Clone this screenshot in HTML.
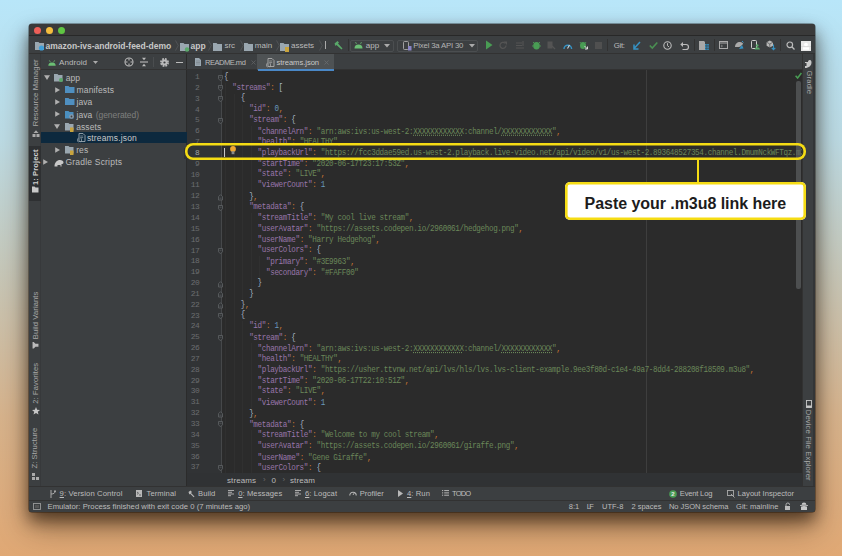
<!DOCTYPE html>
<html><head><meta charset="utf-8">
<style>
*{box-sizing:border-box;margin:0;padding:0}
html,body{width:842px;height:556px;overflow:hidden}
body{position:relative;background:linear-gradient(180deg,#b8e6f9 0%,#bcdbe4 25%,#c7c6b6 50%,#d7b38c 75%,#e0a874 100%);font-family:"Liberation Sans",sans-serif}
.a{position:absolute}
.t{white-space:nowrap}
.t u{text-decoration:underline;text-underline-offset:1px}
svg{overflow:visible}
#win{left:29px;top:24px;width:786px;height:488px;border-radius:3px;background:#3c3f41;box-shadow:0 8px 16px rgba(20,10,0,.55),0 16px 30px rgba(40,20,0,.4),0 0 0 .5px rgba(0,0,0,.6)}
pre{font-family:"Liberation Mono",monospace;font-size:7.6px;letter-spacing:-0.35px;line-height:10.84px}
#code{left:1.9px;top:2.3px;color:#a9b7c6;line-height:9.70px;transform:scaleY(1.12);transform-origin:0 0}
#code i{font-style:normal}
#code b{font-weight:normal}
.k{color:#9876aa}.s{color:#6a8759}.n{color:#6897bb}.o{color:#cc7832}
#code u{text-decoration:underline dotted #6a8759}
#nums{left:184px;top:72.0px;width:15.5px;text-align:right;color:#6b6d70;font-size:7.9px;letter-spacing:-0.3px}
.g{position:absolute;width:1px;background:#303030}
</style></head><body>
<div id="win" class="a"></div>
<!-- title bar -->
<div class="a" style="left:29px;top:24px;width:786px;height:12px;background:#3a3a3a;border-radius:3px 3px 0 0;border-bottom:1px solid #282828"></div>
<div class="a" style="left:33.8px;top:26.6px;width:7.4px;height:7.4px;border-radius:50%;background:#ee5f58"></div>
<div class="a" style="left:45.7px;top:26.6px;width:7.4px;height:7.4px;border-radius:50%;background:#f4bd3e"></div>
<div class="a" style="left:57.8px;top:26.6px;width:7.4px;height:7.4px;border-radius:50%;background:#5fc543"></div>
<!-- nav bar -->
<div class="a" style="left:29px;top:36px;width:786px;height:18px;background:#3c3f41;border-bottom:1px solid #323232"></div>
<!-- left strip -->
<div class="a" style="left:29px;top:54px;width:12px;height:432px;background:#3c3f41;border-right:1px solid #37393b"></div>
<!-- project panel -->
<div class="a" style="left:41px;top:54px;width:146px;height:432px;background:#3c3f41;border-right:1px solid #2b2b2b"></div>
<div class="a" style="left:41px;top:69px;width:146px;height:1px;background:#323232"></div>
<!-- tabs -->
<div class="a" style="left:187px;top:54px;width:615px;height:16px;background:#3c3f41;border-bottom:1px solid #323232"></div>
<!-- gutter / editor -->
<div class="a" style="left:187px;top:70px;width:35px;height:403px;background:#313335"></div>
<div class="a" style="left:222px;top:70px;width:580px;height:403px;background:#2b2b2b"></div>
<div class="a" style="left:646px;top:70px;width:1px;height:403px;background:#3e3e3e"></div>
<div class="a" style="left:221px;top:76px;width:1px;height:397px;background:#46484a"></div>
<div class="g" style="left:225.4px;top:82.8px;height:390.2px"></div><div class="g" style="left:233.8px;top:93.7px;height:379.3px"></div><div class="g" style="left:242.2px;top:104.5px;height:195.1px"></div><div class="g" style="left:242.2px;top:321.3px;height:151.7px"></div><div class="g" style="left:250.7px;top:126.2px;height:65.0px"></div><div class="g" style="left:250.7px;top:212.9px;height:75.9px"></div><div class="g" style="left:250.7px;top:343.0px;height:65.0px"></div><div class="g" style="left:250.7px;top:429.7px;height:43.3px"></div><div class="g" style="left:259.1px;top:256.3px;height:21.7px"></div>
<pre id="nums" class="a">1
2
3
4
5
6
7
8
9
10
11
12
13
14
15
16
17
18
19
20
21
22
23
24
25
26
27
28
29
30
31
32
33
34
35
36
37</pre>
<div class="a" style="left:184px;top:148.0px;width:15.5px;height:10.84px;background:#313335"></div><pre class="a" style="left:184px;top:147.9px;width:15.5px;text-align:right;color:#a4a3a3;font-size:7.9px;letter-spacing:-0.3px">8</pre>
<div class="a" style="left:222px;top:70px;width:580px;height:403px;overflow:hidden"><pre id="code" class="a">{
  <i class=k>&quot;streams&quot;</i><b class=o>:</b> [
    {
      <i class=k>&quot;id&quot;</i><b class=o>:</b> <i class=n>0</i><b class=o>,</b>
      <i class=k>&quot;stream&quot;</i><b class=o>:</b> {
        <i class=k>&quot;channelArn&quot;</i><b class=o>:</b> <i class=s>&quot;arn:aws:ivs:us-west-2:<u>XXXXXXXXXXXX</u>:channel/<u>XXXXXXXXXXXX</u>&quot;</i><b class=o>,</b>
        <i class=k>&quot;health&quot;</i><b class=o>:</b> <i class=s>&quot;HEALTHY&quot;</i><b class=o>,</b>
        <i class=k>&quot;playbackUrl&quot;</i><b class=o>:</b> <i class=s>&quot;https://fcc3ddae59ed.us-west-2.playback.live-video.net/api/video/v1/us-west-2.893648527354.channel.DmumNckWFTqz.m3u8&quot;</i><b class=o>,</b>
        <i class=k>&quot;startTime&quot;</i><b class=o>:</b> <i class=s>&quot;2020-06-17T23:17:53Z&quot;</i><b class=o>,</b>
        <i class=k>&quot;state&quot;</i><b class=o>:</b> <i class=s>&quot;LIVE&quot;</i><b class=o>,</b>
        <i class=k>&quot;viewerCount&quot;</i><b class=o>:</b> <i class=n>1</i>
      }<b class=o>,</b>
      <i class=k>&quot;metadata&quot;</i><b class=o>:</b> {
        <i class=k>&quot;streamTitle&quot;</i><b class=o>:</b> <i class=s>&quot;My cool live stream&quot;</i><b class=o>,</b>
        <i class=k>&quot;userAvatar&quot;</i><b class=o>:</b> <i class=s>&quot;https://assets.codepen.io/2960061/hedgehog.png&quot;</i><b class=o>,</b>
        <i class=k>&quot;userName&quot;</i><b class=o>:</b> <i class=s>&quot;Harry Hedgehog&quot;</i><b class=o>,</b>
        <i class=k>&quot;userColors&quot;</i><b class=o>:</b> {
          <i class=k>&quot;primary&quot;</i><b class=o>:</b> <i class=s>&quot;#3E9963&quot;</i><b class=o>,</b>
          <i class=k>&quot;secondary&quot;</i><b class=o>:</b> <i class=s>&quot;#FAFF00&quot;</i>
        }
      }
    }<b class=o>,</b>
    {
      <i class=k>&quot;id&quot;</i><b class=o>:</b> <i class=n>1</i><b class=o>,</b>
      <i class=k>&quot;stream&quot;</i><b class=o>:</b> {
        <i class=k>&quot;channelArn&quot;</i><b class=o>:</b> <i class=s>&quot;arn:aws:ivs:us-west-2:<u>XXXXXXXXXXXX</u>:channel/<u>XXXXXXXXXXXX</u>&quot;</i><b class=o>,</b>
        <i class=k>&quot;health&quot;</i><b class=o>:</b> <i class=s>&quot;HEALTHY&quot;</i><b class=o>,</b>
        <i class=k>&quot;playbackUrl&quot;</i><b class=o>:</b> <i class=s>&quot;https://usher.ttvnw.net/api/lvs/hls/lvs.lvs-client-example.9ee3f80d-c1e4-49a7-8dd4-288208f18509.m3u8&quot;</i><b class=o>,</b>
        <i class=k>&quot;startTime&quot;</i><b class=o>:</b> <i class=s>&quot;2020-06-17T22:10:51Z&quot;</i><b class=o>,</b>
        <i class=k>&quot;state&quot;</i><b class=o>:</b> <i class=s>&quot;LIVE&quot;</i><b class=o>,</b>
        <i class=k>&quot;viewerCount&quot;</i><b class=o>:</b> <i class=n>1</i>
      }<b class=o>,</b>
      <i class=k>&quot;metadata&quot;</i><b class=o>:</b> {
        <i class=k>&quot;streamTitle&quot;</i><b class=o>:</b> <i class=s>&quot;Welcome to my cool stream&quot;</i><b class=o>,</b>
        <i class=k>&quot;userAvatar&quot;</i><b class=o>:</b> <i class=s>&quot;https://assets.codepen.io/2960061/giraffe.png&quot;</i><b class=o>,</b>
        <i class=k>&quot;userName&quot;</i><b class=o>:</b> <i class=s>&quot;Gene Giraffe&quot;</i><b class=o>,</b>
        <i class=k>&quot;userColors&quot;</i><b class=o>:</b> {</pre></div>
<div class="a" style="left:796px;top:81px;width:4.5px;height:208px;background:rgba(95,98,100,.65);border-radius:2px"></div>
<!-- crumb -->
<div class="a" style="left:187px;top:473px;width:615px;height:13px;background:#303234"></div>
<!-- right strip -->
<div class="a" style="left:802px;top:54px;width:13px;height:432px;background:#3c3f41;border-left:1px solid #323232"></div>
<div class="a" style="left:812.8px;top:54px;width:2.2px;height:432px;background:#333537"></div>
<!-- tool bar & status -->
<div class="a" style="left:29px;top:486px;width:786px;height:14px;background:#3c3f41;border-top:1px solid #323232"></div>
<div class="a" style="left:29px;top:500px;width:786px;height:12px;background:#3c3f41;border-top:1px solid #323232;border-radius:0 0 3px 3px"></div>
<svg class="a" style="left:35px;top:41px;" width="10" height="10" viewBox="0 0 10 10"><path d="M0 1h3.5l1 1H9v7H0z" fill="#9aa7b0"/><circle cx="6.5" cy="7" r="2.6" fill="#3f9fd8"/></svg>
<div class="a t" style="left:45.6px;top:40.90px;font-size:8.5px;line-height:10.20px;color:#c8c8c8;font-weight:bold;letter-spacing:-0.02px;">amazon-ivs-android-feed-demo</div>
<svg class="a" style="left:174.5px;top:40px;" width="4" height="11" viewBox="0 0 4 11"><path d="M0.5 0.5L3.3 5.5 0.5 10.5" fill="none" stroke="#55585a" stroke-width="0.8"/></svg>
<svg class="a" style="left:179.5px;top:41.5px;" width="10" height="10" viewBox="0 0 10 10"><path d="M0 1h3.5l1 1H9v7H0z" fill="#9aa7b0"/><circle cx="7" cy="7.5" r="2.2" fill="#59a869"/></svg>
<div class="a t" style="left:190.5px;top:40.90px;font-size:8.5px;line-height:10.20px;color:#c8c8c8;font-weight:bold;">app</div>
<svg class="a" style="left:208px;top:40px;" width="4" height="11" viewBox="0 0 4 11"><path d="M0.5 0.5L3.3 5.5 0.5 10.5" fill="none" stroke="#55585a" stroke-width="0.8"/></svg>
<svg class="a" style="left:213px;top:41.5px;" width="9" height="8" viewBox="0 0 9 8"><path d="M0 1h3.5l1 1H9v7H0z" fill="#9aa7b0"/></svg>
<div class="a t" style="left:224.4px;top:41.20px;font-size:8px;line-height:9.60px;color:#bbb;">src</div>
<svg class="a" style="left:239.5px;top:40px;" width="4" height="11" viewBox="0 0 4 11"><path d="M0.5 0.5L3.3 5.5 0.5 10.5" fill="none" stroke="#55585a" stroke-width="0.8"/></svg>
<svg class="a" style="left:244px;top:41.5px;" width="9" height="8" viewBox="0 0 9 8"><path d="M0 1h3.5l1 1H9v7H0z" fill="#9aa7b0"/></svg>
<div class="a t" style="left:254.8px;top:41.20px;font-size:8px;line-height:9.60px;color:#bbb;">main</div>
<svg class="a" style="left:275.8px;top:40px;" width="4" height="11" viewBox="0 0 4 11"><path d="M0.5 0.5L3.3 5.5 0.5 10.5" fill="none" stroke="#55585a" stroke-width="0.8"/></svg>
<svg class="a" style="left:280.3px;top:41.5px;" width="10" height="10" viewBox="0 0 10 10"><path d="M0 1h3.5l1 1H9v7H0z" fill="#9aa7b0"/><rect x="5" y="5" width="4" height="5" fill="#c9a43d"/></svg>
<div class="a t" style="left:291px;top:41.20px;font-size:8px;line-height:9.60px;color:#bbb;">assets</div>
<svg class="a" style="left:319px;top:40px;" width="4" height="11" viewBox="0 0 4 11"><path d="M0.5 0.5L3.3 5.5 0.5 10.5" fill="none" stroke="#55585a" stroke-width="0.8"/></svg>
<div class="a" style="left:325px;top:41px;width:1px;height:8px;background:#aaa"></div>
<svg class="a" style="left:333px;top:40px;" width="10" height="10" viewBox="0 0 10 10"><path d="M1.5 3.5l3-2.5 1.5 1.5-1 1 4.5 5-1 1-5-4.5-1 1z" fill="#59a869"/></svg>
<div class="a" style="left:348px;top:39px;width:1px;height:12px;background:#323232"></div>
<div class="a" style="left:349.8px;top:39.6px;width:44px;height:12px;border:1px solid #4b4e50;border-radius:2px"></div>
<svg class="a" style="left:353.9px;top:41px;" width="9" height="8" viewBox="0 0 9 8"><path d="M0.5 7.5a4 4 0 0 1 8 0z" fill="#6bbf74"/><path d="M1.5 1l1 2M7.5 1l-1 2" stroke="#6bbf74" stroke-width="0.7"/></svg>
<div class="a t" style="left:365.8px;top:41.20px;font-size:8px;line-height:9.60px;color:#bbb;">app</div>
<svg class="a" style="left:384px;top:43.5px;" width="6" height="4" viewBox="0 0 6 4"><path d="M0 0h6L3 3.5z" fill="#aaa"/></svg>
<div class="a" style="left:397.3px;top:39.6px;width:81px;height:12px;border:1px solid #4b4e50;border-radius:2px"></div>
<svg class="a" style="left:403px;top:40.5px;" width="9" height="10" viewBox="0 0 9 10"><rect x="0.5" y="0.5" width="5" height="8" rx="1" fill="none" stroke="#aaa" stroke-width="0.9"/><rect x="5" y="5" width="3.5" height="4.5" fill="#8a85c5"/></svg>
<div class="a t" style="left:413.3px;top:41.32px;font-size:7.8px;line-height:9.36px;color:#b4b4b4;letter-spacing:-0.2px;">Pixel 3a API 30</div>
<svg class="a" style="left:469px;top:43.5px;" width="6" height="4" viewBox="0 0 6 4"><path d="M0 0h6L3 3.5z" fill="#aaa"/></svg>
<svg class="a" style="left:485.7px;top:40px;" width="7" height="10" viewBox="0 0 7 10"><path d="M0 0.5L6.5 5 0 9.5z" fill="#499c54"/></svg>
<svg class="a" style="left:499.4px;top:40.5px;" width="9" height="9" viewBox="0 0 9 9"><path d="M7 4.5a3 3 0 1 1-1-2.3" fill="none" stroke="#545454" stroke-width="1.3"/><path d="M4.5 0.5h3.5v3.5z" fill="#545454"/></svg>
<svg class="a" style="left:516px;top:40.5px;" width="9" height="9" viewBox="0 0 9 9"><path d="M0 2h6M0 4.5h6M0 7h8M7 0v5" stroke="#545454" stroke-width="1.1"/></svg>
<svg class="a" style="left:531.5px;top:40px;" width="9" height="10" viewBox="0 0 9 10"><ellipse cx="4.5" cy="5.8" rx="3.3" ry="3.8" fill="#499c54"/><path d="M1 2l1.5 1.5M8 2L6.5 3.5M0 6h1.5M7.5 6H9" stroke="#499c54" stroke-width="0.9"/></svg>
<svg class="a" style="left:546.6px;top:40.5px;" width="9" height="9" viewBox="0 0 9 9"><rect x="0.5" y="0.5" width="5" height="7" fill="#545454"/><path d="M5 5l3 3" stroke="#545454" stroke-width="1.2"/></svg>
<svg class="a" style="left:562.7px;top:40.5px;" width="9" height="9" viewBox="0 0 9 9"><path d="M1 8a3.8 3.8 0 1 1 7.6 0" fill="none" stroke="#3592c4" stroke-width="1.4"/><path d="M4.5 7.5l2-3.5" stroke="#cfd8dc" stroke-width="1.1"/></svg>
<svg class="a" style="left:578.7px;top:40px;" width="9" height="10" viewBox="0 0 9 10"><ellipse cx="4" cy="5.5" rx="3" ry="3.6" fill="#499c54"/><path d="M0.8 2l1.4 1.4M7.2 2L5.8 3.4" stroke="#499c54" stroke-width="0.9"/><path d="M5.5 6l3 3M6 9h2.5V6.5" stroke="#ddd" stroke-width="1" fill="none"/></svg>
<svg class="a" style="left:594.7px;top:41.5px;" width="7" height="7" viewBox="0 0 7 7"><rect width="7" height="7" fill="#505050"/></svg>
<div class="a" style="left:607px;top:39px;width:1px;height:12px;background:#323232"></div>
<div class="a t" style="left:613.7px;top:41.32px;font-size:7.8px;line-height:9.36px;color:#bbb;letter-spacing:-0.278px;">Git:</div>
<svg class="a" style="left:633px;top:40.5px;" width="8" height="9" viewBox="0 0 8 9"><path d="M7 1L1.5 7M1 3.5V8h4.5" stroke="#3592c4" stroke-width="1.5" fill="none"/></svg>
<svg class="a" style="left:648.5px;top:41px;" width="9" height="8" viewBox="0 0 9 8"><path d="M0.8 4.5l2.5 2.5 5-5.5" stroke="#4a8f52" stroke-width="1.6" fill="none"/></svg>
<svg class="a" style="left:663.3px;top:40.5px;" width="9" height="9" viewBox="0 0 9 9"><circle cx="4.5" cy="4.5" r="3.7" fill="none" stroke="#bbb" stroke-width="1.1"/><path d="M4.5 2.2v2.5l1.6 1.3" stroke="#bbb" stroke-width="1" fill="none"/></svg>
<svg class="a" style="left:680px;top:40.5px;" width="9" height="9" viewBox="0 0 9 9"><path d="M2 3.5h4a2.5 2.5 0 0 1 0 5H2.5" stroke="#bbb" stroke-width="1.2" fill="none"/><path d="M0.3 3.5L3 1v5z" fill="#bbb"/></svg>
<div class="a" style="left:693.6px;top:39px;width:1px;height:12px;background:#323232"></div>
<svg class="a" style="left:699px;top:40.5px;" width="10" height="9" viewBox="0 0 10 9"><path d="M0 0h5l1 1v8H0z" fill="#a8a8a8"/><rect x="6" y="3" width="1.6" height="1.6" fill="#3592c4"/><rect x="8.2" y="3" width="1.6" height="1.6" fill="#3592c4"/><rect x="6" y="5.3" width="1.6" height="1.6" fill="#3592c4"/><rect x="8.2" y="5.3" width="1.6" height="1.6" fill="#3592c4"/><rect x="6" y="7.5" width="1.6" height="1.5" fill="#3592c4"/><rect x="8.2" y="7.5" width="1.6" height="1.5" fill="#3592c4"/></svg>
<div class="a" style="left:713.8px;top:39px;width:1px;height:12px;background:#323232"></div>
<svg class="a" style="left:719.2px;top:41px;" width="9" height="8" viewBox="0 0 9 8"><rect x="0.5" y="0.5" width="8" height="7" fill="none" stroke="#aaa" stroke-width="1"/><path d="M0.5 2h8" stroke="#aaa"/><path d="M2 4l1.5 1L2 6" stroke="#aaa" stroke-width="0.6" fill="none"/></svg>
<svg class="a" style="left:734px;top:40px;" width="10" height="10" viewBox="0 0 10 10"><path d="M1 7c0-3 2-5 5-5 2 0 3 1 3 2l-1 1c-1 1-2 2-3 2z" fill="#aaa"/><path d="M5 9l3-4 1.5 3.5z" fill="#3592c4"/><path d="M8 1l1.5 1.5" stroke="#3592c4"/></svg>
<svg class="a" style="left:751.2px;top:40px;" width="9" height="10" viewBox="0 0 9 10"><rect x="0.5" y="0.5" width="5" height="8" rx="1" fill="none" stroke="#ccc" stroke-width="1"/><path d="M3.5 9.5a2.8 2.8 0 0 1 5.5 0z" fill="#59a869"/><circle cx="6.2" cy="5.5" r="1.3" fill="#59a869"/></svg>
<svg class="a" style="left:765.5px;top:40px;" width="10" height="10" viewBox="0 0 10 10"><path d="M3.8 0.5L7 2.2v3.6L3.8 7.5 0.6 5.8V2.2z" fill="#b8b8b8"/><path d="M0.6 2.2L3.8 4 7 2.2M3.8 4v3.5" stroke="#3c3f41" stroke-width="0.6" fill="none"/><path d="M7.5 4.5v5M5.7 7.8L7.5 9.6l1.8-1.8" stroke="#3592c4" stroke-width="1.1" fill="none"/></svg>
<div class="a" style="left:780.3px;top:39px;width:1px;height:12px;background:#323232"></div>
<svg class="a" style="left:785.7px;top:40.5px;" width="9" height="9" viewBox="0 0 9 9"><circle cx="3.8" cy="3.8" r="2.8" fill="none" stroke="#bbb" stroke-width="1.2"/><path d="M5.8 5.8l2.7 2.7" stroke="#bbb" stroke-width="1.3"/></svg>
<svg class="a" style="left:801px;top:40.8px;" width="10" height="10" viewBox="0 0 10 10"><rect width="10" height="10" fill="#e8e8e8"/><circle cx="5" cy="3.6" r="1.9" fill="#fff"/><rect x="2" y="6.3" width="6" height="2.4" fill="#fff"/><path d="M0 5.5h10" stroke="#cfcfcf" stroke-width="0.5"/></svg>
<svg class="a" style="left:47.6px;top:59.5px;" width="8" height="6" viewBox="0 0 8 6"><path d="M0.3 5.8a3.7 3.4 0 0 1 7.4 0z" fill="#6bbf74"/><path d="M1.3 0.3l1.2 2M6.7 0.3l-1.2 2" stroke="#6bbf74" stroke-width="0.7"/></svg>
<div class="a t" style="left:59px;top:57.50px;font-size:8px;line-height:9.60px;color:#bbb;letter-spacing:0.071px;">Android</div>
<svg class="a" style="left:93px;top:61px;" width="5" height="3.5" viewBox="0 0 5 3.5"><path d="M0 0h5L2.5 3z" fill="#aaa"/></svg>
<svg class="a" style="left:123.8px;top:57.3px;" width="10" height="10" viewBox="0 0 10 10"><circle cx="5" cy="5" r="4" fill="none" stroke="#bbb" stroke-width="1.1"/><path d="M5 1.5v2M5 6.5v2M1.5 5h2M6.5 5h2" stroke="#bbb" stroke-width="1.1"/></svg>
<svg class="a" style="left:140.4px;top:57.3px;" width="8" height="10" viewBox="0 0 8 10"><path d="M0 5h8" stroke="#bbb" stroke-width="1.1"/><path d="M2 0.8h4L4 3.2zM2 9.2h4L4 6.8z" fill="#bbb"/></svg>
<div class="a" style="left:153px;top:57px;width:1px;height:10px;background:#4a4d4f"></div>
<svg class="a" style="left:159.9px;top:57.8px;" width="9" height="9" viewBox="0 0 9 9"><circle cx="4.5" cy="4.5" r="3.6" fill="none" stroke="#bbb" stroke-width="1.7" stroke-dasharray="1.8 1.03"/><circle cx="4.5" cy="4.5" r="3.0" fill="#bbb"/><circle cx="4.5" cy="4.5" r="1.1" fill="#3c3f41"/></svg>
<div class="a" style="left:176px;top:61.5px;width:7px;height:1.3px;background:#bbb"></div>
<div class="a" style="left:257px;top:54px;width:77px;height:16px;background:#4e5254"></div>
<div class="a" style="left:257.5px;top:68.8px;width:76.5px;height:2px;background:#4a88c7"></div>
<svg class="a" style="left:195px;top:58.3px;" width="6" height="8" viewBox="0 0 6 8"><path d="M0 0h4l2 2v6H0z" fill="#9aa7b0"/><path d="M1 3h4M1 4.5h4M1 6h4" stroke="#6e7478" stroke-width="0.5"/></svg>
<div class="a t" style="left:205px;top:58.10px;font-size:7.5px;line-height:9.00px;color:#bbb;letter-spacing:-0.474px;">README.md</div>
<svg class="a" style="left:250.5px;top:59.5px;" width="5" height="5" viewBox="0 0 5 5"><path d="M0.5 0.5l4 4M4.5 0.5l-4 4" stroke="#5f6264" stroke-width="0.8"/></svg>
<svg class="a" style="left:265.7px;top:58px;" width="9" height="9" viewBox="0 0 9 9"><path d="M2 0.5h4l2 2V8.5H2z" fill="none" stroke="#adadad" stroke-width="0.9"/><path d="M3.2 3h3M3.2 4.6h3" stroke="#adadad" stroke-width="0.7"/><rect x="0" y="5" width="5.6" height="4" fill="#3c3f41" opacity="0"/><path d="M1.6 5.2c-0.8 0-0.8 0.3-0.8 1s0 0.9-0.6 0.9c0.6 0 0.6 0.2 0.6 0.9s0 1 0.8 1M3.6 5.2c0.8 0 0.8 0.3 0.8 1s0 0.9 0.6 0.9c-0.6 0-0.6 0.2-0.6 0.9s0 1-0.8 1" fill="none" stroke="#adadad" stroke-width="0.8"/></svg>
<div class="a t" style="left:276.4px;top:58.04px;font-size:7.6px;line-height:9.12px;color:#c8c8c8;letter-spacing:-0.035px;">streams.json</div>
<svg class="a" style="left:324px;top:59.5px;" width="5" height="5" viewBox="0 0 5 5"><path d="M0.5 0.5l4 4M4.5 0.5l-4 4" stroke="#6a6d70" stroke-width="0.8"/></svg>
<svg class="a" style="left:44px;top:74.5px;" width="6" height="5" viewBox="0 0 6 5"><path d="M0 0.2h6L3 5z" fill="#b0b0b0"/></svg>
<svg class="a" style="left:54.3px;top:72.5px;" width="9" height="9" viewBox="0 0 9 9"><path d="M0 1h3.5l1 1H8.5v6.5H0z" fill="#9aa7b0"/><circle cx="7" cy="7" r="2" fill="#59a869"/></svg>
<div class="a t" style="left:65.7px;top:72.50px;font-size:8.5px;line-height:10.20px;color:#bbb;letter-spacing:0.059px;">app</div>
<svg class="a" style="left:54.5px;top:86.5px;" width="5" height="6" viewBox="0 0 5 6"><path d="M0.2 0.2L5 3 0.2 5.8z" fill="#b0b0b0"/></svg>
<svg class="a" style="left:65px;top:86px;" width="10" height="7" viewBox="0 0 10 7"><path d="M0 0h3.5l1 1H9.5v6H0z" fill="#4f8fc0"/></svg>
<div class="a t" style="left:76.6px;top:85.00px;font-size:8.5px;line-height:10.20px;color:#bbb;letter-spacing:0.128px;">manifests</div>
<svg class="a" style="left:54.5px;top:98.8px;" width="5" height="6" viewBox="0 0 5 6"><path d="M0.2 0.2L5 3 0.2 5.8z" fill="#b0b0b0"/></svg>
<svg class="a" style="left:65px;top:98.3px;" width="10" height="7" viewBox="0 0 10 7"><path d="M0 0h3.5l1 1H9.5v6H0z" fill="#4f8fc0"/></svg>
<div class="a t" style="left:76.6px;top:97.30px;font-size:8.5px;line-height:10.20px;color:#bbb;letter-spacing:0.035px;">java</div>
<svg class="a" style="left:54.5px;top:111px;" width="5" height="6" viewBox="0 0 5 6"><path d="M0.2 0.2L5 3 0.2 5.8z" fill="#b0b0b0"/></svg>
<svg class="a" style="left:65px;top:109.5px;" width="10" height="9" viewBox="0 0 10 9"><path d="M0 1h3.5l1 1H8.5v6.5H0z" fill="#4a8fc0"/><circle cx="6.5" cy="6.5" r="2.3" fill="#8a9aa8"/><circle cx="6.5" cy="6.5" r="0.9" fill="#3c3f41"/></svg>
<div class="a t" style="left:76.6px;top:109.50px;font-size:8.5px;line-height:10.20px;color:#bbb;letter-spacing:0.035px;">java</div>
<div class="a t" style="left:95.8px;top:109.50px;font-size:8.5px;line-height:10.20px;color:#7f7f7f;letter-spacing:-0.075px;">(generated)</div>
<svg class="a" style="left:54px;top:123.5px;" width="6" height="5" viewBox="0 0 6 5"><path d="M0 0.2h6L3 5z" fill="#b0b0b0"/></svg>
<svg class="a" style="left:65px;top:121.5px;" width="10" height="10" viewBox="0 0 10 10"><path d="M0 1h3.5l1 1H8.5v6.5H0z" fill="#9aa7b0"/><rect x="5" y="5.5" width="3.5" height="4.5" fill="#c9a43d"/></svg>
<div class="a t" style="left:76.2px;top:121.50px;font-size:8.5px;line-height:10.20px;color:#bbb;letter-spacing:0.087px;">assets</div>
<div class="a" style="left:41px;top:131.7px;width:145.5px;height:11.5px;background:#0d293e"></div>
<svg class="a" style="left:77.4px;top:133px;" width="9" height="9" viewBox="0 0 9 9"><path d="M2 0.5h4l2 2V8.5H2z" fill="none" stroke="#9aa7b0" stroke-width="0.9"/><path d="M3.2 3h3M3.2 4.6h3" stroke="#9aa7b0" stroke-width="0.7"/><rect x="0" y="5" width="5.6" height="4" fill="#3c3f41" opacity="0"/><path d="M1.6 5.2c-0.8 0-0.8 0.3-0.8 1s0 0.9-0.6 0.9c0.6 0 0.6 0.2 0.6 0.9s0 1 0.8 1M3.6 5.2c0.8 0 0.8 0.3 0.8 1s0 0.9 0.6 0.9c-0.6 0-0.6 0.2-0.6 0.9s0 1-0.8 1" fill="none" stroke="#9aa7b0" stroke-width="0.8"/></svg>
<div class="a t" style="left:86.9px;top:133.10px;font-size:8.5px;line-height:10.20px;color:#c8c8c8;letter-spacing:0.156px;">streams.json</div>
<svg class="a" style="left:54.5px;top:146.5px;" width="5" height="6" viewBox="0 0 5 6"><path d="M0.2 0.2L5 3 0.2 5.8z" fill="#b0b0b0"/></svg>
<svg class="a" style="left:65px;top:145px;" width="10" height="10" viewBox="0 0 10 10"><path d="M0 1h3.5l1 1H8.5v6.5H0z" fill="#9aa7b0"/><rect x="5" y="5.5" width="3.5" height="4.5" fill="#c9a43d"/></svg>
<div class="a t" style="left:76.2px;top:145.00px;font-size:8.5px;line-height:10.20px;color:#bbb;letter-spacing:0.096px;">res</div>
<svg class="a" style="left:43.3px;top:159px;" width="5" height="6" viewBox="0 0 5 6"><path d="M0.2 0.2L5 3 0.2 5.8z" fill="#b0b0b0"/></svg>
<svg class="a" style="left:53.7px;top:157.5px;" width="10" height="9" viewBox="0 0 10 9"><path d="M0.5 8.5c0-4 2.5-6.5 5.5-6.5 2 0 3.5 1 3.5 2.5 0 1-1 1.5-2 1.5v2.5H6.5V7H3.5v1.5z" fill="#c8c8c8"/></svg>
<div class="a t" style="left:65.5px;top:156.90px;font-size:8.5px;line-height:10.20px;color:#bbb;letter-spacing:0.2px;">Gradle Scripts</div>
<svg class="a" style="left:218.3px;top:74.6px;" width="5" height="6.5" viewBox="0 0 5 6.5"><path d="M0.5 0.5h4v3.3L2.5 5.8 0.5 3.8z" fill="#313335" stroke="#606366" stroke-width="0.8"/><path d="M1.5 2.3h2" stroke="#606366" stroke-width="0.6"/></svg>
<svg class="a" style="left:218.3px;top:85.44px;" width="5" height="6.5" viewBox="0 0 5 6.5"><path d="M0.5 0.5h4v3.3L2.5 5.8 0.5 3.8z" fill="#313335" stroke="#606366" stroke-width="0.8"/><path d="M1.5 2.3h2" stroke="#606366" stroke-width="0.6"/></svg>
<svg class="a" style="left:218.3px;top:96.28px;" width="5" height="6.5" viewBox="0 0 5 6.5"><path d="M0.5 0.5h4v3.3L2.5 5.8 0.5 3.8z" fill="#313335" stroke="#606366" stroke-width="0.8"/><path d="M1.5 2.3h2" stroke="#606366" stroke-width="0.6"/></svg>
<svg class="a" style="left:218.3px;top:117.96px;" width="5" height="6.5" viewBox="0 0 5 6.5"><path d="M0.5 0.5h4v3.3L2.5 5.8 0.5 3.8z" fill="#313335" stroke="#606366" stroke-width="0.8"/><path d="M1.5 2.3h2" stroke="#606366" stroke-width="0.6"/></svg>
<svg class="a" style="left:218.3px;top:204.67999999999998px;" width="5" height="6.5" viewBox="0 0 5 6.5"><path d="M0.5 0.5h4v3.3L2.5 5.8 0.5 3.8z" fill="#313335" stroke="#606366" stroke-width="0.8"/><path d="M1.5 2.3h2" stroke="#606366" stroke-width="0.6"/></svg>
<svg class="a" style="left:218.3px;top:248.04px;" width="5" height="6.5" viewBox="0 0 5 6.5"><path d="M0.5 0.5h4v3.3L2.5 5.8 0.5 3.8z" fill="#313335" stroke="#606366" stroke-width="0.8"/><path d="M1.5 2.3h2" stroke="#606366" stroke-width="0.6"/></svg>
<svg class="a" style="left:218.3px;top:313.08px;" width="5" height="6.5" viewBox="0 0 5 6.5"><path d="M0.5 0.5h4v3.3L2.5 5.8 0.5 3.8z" fill="#313335" stroke="#606366" stroke-width="0.8"/><path d="M1.5 2.3h2" stroke="#606366" stroke-width="0.6"/></svg>
<svg class="a" style="left:218.3px;top:334.76px;" width="5" height="6.5" viewBox="0 0 5 6.5"><path d="M0.5 0.5h4v3.3L2.5 5.8 0.5 3.8z" fill="#313335" stroke="#606366" stroke-width="0.8"/><path d="M1.5 2.3h2" stroke="#606366" stroke-width="0.6"/></svg>
<svg class="a" style="left:218.3px;top:421.48px;" width="5" height="6.5" viewBox="0 0 5 6.5"><path d="M0.5 0.5h4v3.3L2.5 5.8 0.5 3.8z" fill="#313335" stroke="#606366" stroke-width="0.8"/><path d="M1.5 2.3h2" stroke="#606366" stroke-width="0.6"/></svg>
<svg class="a" style="left:218.3px;top:464.84000000000003px;" width="5" height="6.5" viewBox="0 0 5 6.5"><path d="M0.5 0.5h4v3.3L2.5 5.8 0.5 3.8z" fill="#313335" stroke="#606366" stroke-width="0.8"/><path d="M1.5 2.3h2" stroke="#606366" stroke-width="0.6"/></svg>
<svg class="a" style="left:218.3px;top:193.83999999999997px;" width="5" height="6.5" viewBox="0 0 5 6.5"><path d="M0.5 6h4V2.7L2.5 0.7 0.5 2.7z" fill="#313335" stroke="#606366" stroke-width="0.8"/><path d="M1.5 4.2h2" stroke="#606366" stroke-width="0.6"/></svg>
<svg class="a" style="left:218.3px;top:280.56px;" width="5" height="6.5" viewBox="0 0 5 6.5"><path d="M0.5 6h4V2.7L2.5 0.7 0.5 2.7z" fill="#313335" stroke="#606366" stroke-width="0.8"/><path d="M1.5 4.2h2" stroke="#606366" stroke-width="0.6"/></svg>
<svg class="a" style="left:218.3px;top:291.4px;" width="5" height="6.5" viewBox="0 0 5 6.5"><path d="M0.5 6h4V2.7L2.5 0.7 0.5 2.7z" fill="#313335" stroke="#606366" stroke-width="0.8"/><path d="M1.5 4.2h2" stroke="#606366" stroke-width="0.6"/></svg>
<svg class="a" style="left:218.3px;top:302.24px;" width="5" height="6.5" viewBox="0 0 5 6.5"><path d="M0.5 6h4V2.7L2.5 0.7 0.5 2.7z" fill="#313335" stroke="#606366" stroke-width="0.8"/><path d="M1.5 4.2h2" stroke="#606366" stroke-width="0.6"/></svg>
<svg class="a" style="left:218.3px;top:410.64px;" width="5" height="6.5" viewBox="0 0 5 6.5"><path d="M0.5 6h4V2.7L2.5 0.7 0.5 2.7z" fill="#313335" stroke="#606366" stroke-width="0.8"/><path d="M1.5 4.2h2" stroke="#606366" stroke-width="0.6"/></svg>
<div class="a" style="left:224.3px;top:148px;width:1.1px;height:9px;background:#c8c8c8"></div>
<svg class="a" style="left:229.8px;top:146.3px;" width="6" height="9" viewBox="0 0 6 9"><circle cx="3" cy="3" r="2.9" fill="#f0a732"/><rect x="1.6" y="5.2" width="2.8" height="3" fill="#8a8a8a"/></svg>
<div class="a t" style="left:3.60px;top:89.74px;width:63.40px;height:9.12px;text-align:center;font-size:7.6px;line-height:9.12px;color:#a8a8a8;transform:rotate(-90deg);letter-spacing:0.15px;white-space:nowrap">Resource Manager</div>
<svg class="a" style="left:31.5px;top:130px;" width="8" height="7" viewBox="0 0 8 7"><path d="M4 0.3L6.5 3H1.5z" fill="#aaa"/><rect x="0.5" y="4" width="3" height="3" fill="#aaa"/><rect x="4.5" y="4" width="3" height="3" fill="#aaa"/></svg>
<div class="a" style="left:29px;top:145.5px;width:12px;height:55.5px;background:#2e3032"></div>
<div class="a t" style="left:19.00px;top:163.94px;width:33.00px;height:9.12px;text-align:center;font-size:7.6px;line-height:9.12px;color:#d0d0d0;transform:rotate(-90deg);font-weight:bold;letter-spacing:0.1px;white-space:nowrap"><u style="text-decoration:none">1</u>: Project</div>
<svg class="a" style="left:32.3px;top:186.3px;" width="6.5" height="6.5" viewBox="0 0 6.5 6.5"><path d="M0 0.5h2.5l1 1H6.5v5H0z" fill="#c8c8c8"/></svg>
<div class="a t" style="left:11.60px;top:310.54px;width:47.40px;height:9.12px;text-align:center;font-size:7.6px;line-height:9.12px;color:#a8a8a8;transform:rotate(-90deg);letter-spacing:0.1px;white-space:nowrap">Build Variants</div>
<svg class="a" style="left:32px;top:342.3px;" width="7" height="6.5" viewBox="0 0 7 6.5"><path d="M0.3 0.3h6.4v1.2L5 3.2V6.2H2V3.2L0.3 1.5z" fill="#bbb" transform="rotate(-90 3.5 3.25)"/></svg>
<div class="a t" style="left:15.15px;top:379.09px;width:40.30px;height:9.12px;text-align:center;font-size:7.6px;line-height:9.12px;color:#a8a8a8;transform:rotate(-90deg);letter-spacing:0.1px;white-space:nowrap">2: Favorites</div>
<svg class="a" style="left:31.5px;top:407px;" width="8" height="8" viewBox="0 0 8 8"><path d="M4 0l1.1 2.7 2.9.2-2.2 1.9.7 2.8L4 6.1 1.5 7.6l.7-2.8L0 2.9l2.9-.2z" fill="#c8c8c8"/></svg>
<div class="a t" style="left:15.30px;top:444.44px;width:40.00px;height:9.12px;text-align:center;font-size:7.6px;line-height:9.12px;color:#a8a8a8;transform:rotate(-90deg);letter-spacing:0.1px;white-space:nowrap">Z: Structure</div>
<svg class="a" style="left:32px;top:472.5px;" width="7" height="7" viewBox="0 0 7 7"><rect x="0" y="0" width="3" height="3" fill="#aaa"/><rect x="0" y="4" width="3" height="3" fill="#aaa"/><rect x="4" y="4" width="3" height="3" fill="#aaa"/></svg>
<svg class="a" style="left:804px;top:60px;" width="9" height="8" viewBox="0 0 9 8"><path d="M8.5 7.5c0-4-2.5-6.5-5.5-6.5-2 0-2.5 1-2.5 2 0 1 1 1.5 2 1.5v3H3.5V6h3v1.5z" fill="#c8c8c8" transform="rotate(90 4.5 4)"/></svg>
<div class="a t" style="left:797.50px;top:77.44px;width:22.00px;height:9.12px;text-align:center;font-size:7.6px;line-height:9.12px;color:#a8a8a8;transform:rotate(90deg);letter-spacing:0.15px;white-space:nowrap">Gradle</div>
<svg class="a" style="left:805.5px;top:399.5px;" width="6" height="8" viewBox="0 0 6 8"><rect x="0.5" y="0.5" width="5" height="7" fill="none" stroke="#c8c8c8" stroke-width="0.9"/><rect x="0.5" y="5.5" width="5" height="2" fill="#c8c8c8"/></svg>
<div class="a t" style="left:774.70px;top:439.44px;width:67.60px;height:9.12px;text-align:center;font-size:7.6px;line-height:9.12px;color:#a8a8a8;transform:rotate(90deg);letter-spacing:0.15px;white-space:nowrap">Device File Explorer</div>
<svg class="a" style="left:794.5px;top:72px;" width="7" height="7" viewBox="0 0 7 7"><path d="M0.6 3.8l2 2.2L6.4 1" stroke="#499c54" stroke-width="1.5" fill="none"/></svg>
<div class="a t" style="left:227px;top:475.50px;font-size:8px;line-height:9.60px;color:#bbb;letter-spacing:0.092px;">streams</div>
<div class="a t" style="left:263px;top:475.20px;font-size:8px;line-height:9.60px;color:#6a6a6a;">&#x203A;</div>
<div class="a t" style="left:271.5px;top:475.50px;font-size:8px;line-height:9.60px;color:#bbb;">0</div>
<div class="a t" style="left:282.5px;top:475.20px;font-size:8px;line-height:9.60px;color:#6a6a6a;">&#x203A;</div>
<div class="a t" style="left:290px;top:475.50px;font-size:8px;line-height:9.60px;color:#bbb;letter-spacing:0.11px;">stream</div>
<svg class="a" style="left:50px;top:489.5px;" width="6" height="8" viewBox="0 0 6 8"><path d="M1 0v8M1 4c3 0 4-1 4-3" stroke="#aaa" stroke-width="1" fill="none"/><circle cx="5" cy="1.2" r="1" fill="#aaa"/></svg>
<div class="a t" style="left:59.6px;top:488.88px;font-size:7.7px;line-height:9.24px;color:#bcbcbc;letter-spacing:0.1px;"><u>9</u>: Version Control</div>
<svg class="a" style="left:136px;top:489.5px;" width="6" height="7" viewBox="0 0 6 7"><rect width="6" height="7" fill="#b8b8b8"/><path d="M1 2l1.5 1.2L1 4.4M3 5h2" stroke="#3c3f41" stroke-width="0.7" fill="none"/></svg>
<div class="a t" style="left:146.5px;top:488.94px;font-size:7.6px;line-height:9.12px;color:#bcbcbc;letter-spacing:0.1px;">Terminal</div>
<svg class="a" style="left:188.3px;top:489.5px;" width="7" height="7" viewBox="0 0 7 7"><path d="M0.5 2l2-1.5 1.5 1.5-1 1 3.5 3.5-0.8 0.8L2.2 3.8l-0.8 0.8z" fill="#b8b8b8"/></svg>
<div class="a t" style="left:198px;top:488.94px;font-size:7.6px;line-height:9.12px;color:#bcbcbc;letter-spacing:0.1px;">Build</div>
<svg class="a" style="left:228px;top:490px;" width="6" height="6" viewBox="0 0 6 6"><path d="M0 0.5h6M0 2.3h4M0 4h6M0 5.7h3" stroke="#b8b8b8" stroke-width="0.9"/></svg>
<div class="a t" style="left:238.2px;top:488.94px;font-size:7.6px;line-height:9.12px;color:#bcbcbc;letter-spacing:0.1px;"><u>0</u>: Messages</div>
<svg class="a" style="left:295px;top:490px;" width="6" height="6" viewBox="0 0 6 6"><path d="M0 0.5h6M0 2.3h4M0 4h6M0 5.7h3" stroke="#b8b8b8" stroke-width="0.9"/></svg>
<div class="a t" style="left:305px;top:488.94px;font-size:7.6px;line-height:9.12px;color:#bcbcbc;letter-spacing:0.1px;"><u>6</u>: Logcat</div>
<svg class="a" style="left:349px;top:490px;" width="8" height="6" viewBox="0 0 8 6"><path d="M0.8 5.5a3.2 3.2 0 1 1 6.4 0" fill="none" stroke="#b8b8b8" stroke-width="1.1"/><path d="M4 5l1.5-2.5" stroke="#b8b8b8" stroke-width="0.9"/></svg>
<div class="a t" style="left:359.8px;top:488.94px;font-size:7.6px;line-height:9.12px;color:#bcbcbc;letter-spacing:-0.011px;">Profiler</div>
<svg class="a" style="left:398px;top:490px;" width="5" height="7" viewBox="0 0 5 7"><path d="M0 0l5 3.5L0 7z" fill="#b8b8b8"/></svg>
<div class="a t" style="left:407px;top:488.94px;font-size:7.6px;line-height:9.12px;color:#bcbcbc;letter-spacing:0.1px;"><u>4</u>: Run</div>
<svg class="a" style="left:442.3px;top:490px;" width="7" height="6" viewBox="0 0 7 6"><path d="M0 0.6h1.2M0 2.9h1.2M0 5.2h1.2M2.2 0.6H7M2.2 2.9H7M2.2 5.2H7" stroke="#b8b8b8" stroke-width="1"/></svg>
<div class="a t" style="left:452px;top:488.94px;font-size:7.6px;line-height:9.12px;color:#bcbcbc;letter-spacing:-0.872px;">TODO</div>
<svg class="a" style="left:668.5px;top:489.5px;" width="8" height="8" viewBox="0 0 8 8"><circle cx="4" cy="4" r="3.8" fill="#499c54"/><text x="2.2" y="6.3" font-size="6" font-family="Liberation Sans" font-weight="bold" fill="#e8e8e8">2</text></svg>
<div class="a t" style="left:679.8px;top:488.94px;font-size:7.6px;line-height:9.12px;color:#bcbcbc;letter-spacing:-0.203px;">Event Log</div>
<svg class="a" style="left:726.8px;top:489.5px;" width="8" height="8" viewBox="0 0 8 8"><rect x="0.5" y="0.5" width="6" height="5" fill="none" stroke="#aaa" stroke-width="0.9"/><path d="M4 4l3.5 3.5" stroke="#aaa" stroke-width="1"/></svg>
<div class="a t" style="left:737.6px;top:488.94px;font-size:7.6px;line-height:9.12px;color:#bcbcbc;letter-spacing:0.014px;">Layout Inspector</div>
<svg class="a" style="left:33px;top:502.5px;" width="8" height="7" viewBox="0 0 8 7"><rect x="0.5" y="0.5" width="7" height="6" fill="none" stroke="#999" stroke-width="0.9"/><rect x="2" y="2" width="4" height="3" fill="#555"/></svg>
<div class="a t" style="left:47.5px;top:501.68px;font-size:7.7px;line-height:9.24px;color:#bcbcbc;letter-spacing:0.01px;">Emulator: Process finished with exit code 0 (7 minutes ago)</div>
<div class="a t" style="left:568.7px;top:501.80px;font-size:7.5px;line-height:9.00px;color:#bcbcbc;letter-spacing:0.037px;">8:1</div>
<div class="a t" style="left:586.7px;top:501.80px;font-size:7.5px;line-height:9.00px;color:#bcbcbc;letter-spacing:-1.553px;">LF</div>
<div class="a t" style="left:602px;top:501.80px;font-size:7.5px;line-height:9.00px;color:#bcbcbc;letter-spacing:0.013px;">UTF-8</div>
<div class="a t" style="left:631.4px;top:501.80px;font-size:7.5px;line-height:9.00px;color:#bcbcbc;letter-spacing:0.012px;">2 spaces</div>
<div class="a t" style="left:669px;top:501.80px;font-size:7.5px;line-height:9.00px;color:#bcbcbc;letter-spacing:-0.048px;">No JSON schema</div>
<div class="a t" style="left:736px;top:501.80px;font-size:7.5px;line-height:9.00px;color:#bcbcbc;letter-spacing:0.06px;">Git: mainline</div>
<svg class="a" style="left:785px;top:502.5px;" width="7" height="7" viewBox="0 0 7 7"><rect x="0" y="3" width="5" height="4" fill="#bbb"/><path d="M1 3V1.8a1.8 1.8 0 0 1 3.6 0" stroke="#bbb" stroke-width="0.9" fill="none"/></svg>
<svg class="a" style="left:799.6px;top:502px;" width="8" height="8" viewBox="0 0 8 8"><circle cx="4" cy="2.8" r="2.3" fill="#c8c8c8"/><rect x="1" y="4.5" width="6" height="3.5" fill="#c8c8c8"/><path d="M0 3.5h8" stroke="#c8c8c8" stroke-width="0.8"/><circle cx="3" cy="3" r="0.6" fill="#3c3f41"/><circle cx="5" cy="3" r="0.6" fill="#3c3f41"/></svg>
<div class="a" style="left:185px;top:143px;width:621px;height:17px;box-shadow:inset 0 0 0 2.6px #f5dc14;border-radius:8px"></div>
<div class="a" style="left:697px;top:159.5px;width:2px;height:24px;background:#f5dc14"></div>
<div class="a" style="left:565px;top:182px;width:241px;height:38px;background:#fff;box-shadow:inset 0 0 0 2.6px #f5dc14;border-radius:5px"></div>
<div class="a t" style="left:584.6px;top:194.10px;font-size:16px;line-height:19.20px;color:#1c1c1c;font-weight:bold;letter-spacing:-0.05px;">Paste your .m3u8 link here</div>
</body></html>
